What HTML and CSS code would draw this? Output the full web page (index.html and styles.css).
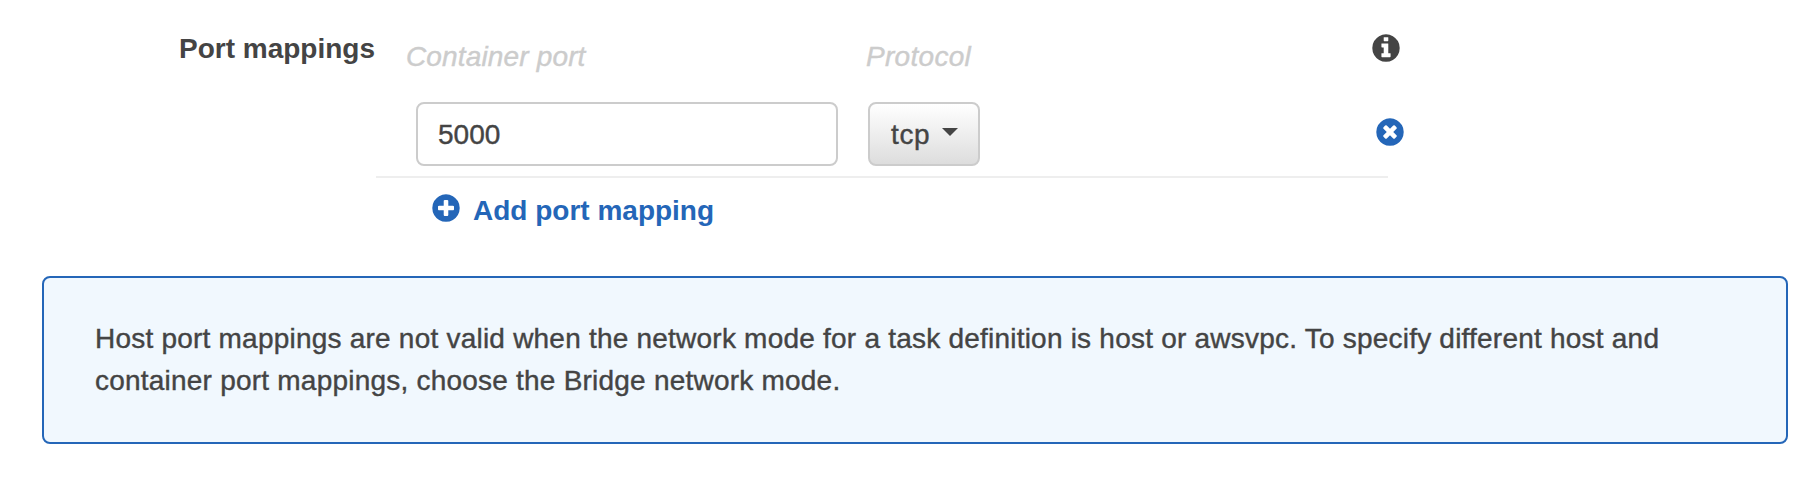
FILE: index.html
```html
<!DOCTYPE html>
<html lang="en">
<head>
<meta charset="utf-8">
<title>Port mappings</title>
<link rel="stylesheet" href="styles.css">
</head>
<body>
<main class="page">
  <section class="field">
    <label class="field-label" for="port">Port mappings</label>
    <div class="mappings">
      <div class="head">
        <span class="col-port">Container port</span>
        <span class="col-protocol">Protocol</span>
        <svg class="icon icon-info" viewBox="0 0 1792 1792"><path d="M1152 1376v-160q0-14-9-23t-23-9h-96v-512q0-14-9-23t-23-9h-320q-14 0-23 9t-9 23v160q0 14 9 23t23 9h96v320h-96q-14 0-23 9t-9 23v160q0 14 9 23t23 9h448q14 0 23-9t9-23zm-128-896v-160q0-14-9-23t-23-9h-192q-14 0-23 9t-9 23v160q0 14 9 23t23 9h192q14 0 23-9t9-23zm640 416q0 209-103 385.5t-279.5 279.5-385.5 103-385.5-103-279.5-279.5-103-385.5 103-385.5 279.5-279.5 385.5-103 385.5 103 279.5 279.5 103 385.5z"/></svg>
      </div>
      <div class="row">
        <input class="port-input" id="port" type="text" value="5000">
        <button class="protocol" type="button"><span>tcp</span><i class="caret"></i></button>
        <svg class="icon icon-remove" viewBox="0 0 1792 1792"><path d="M1277 1122q0-26-19-45l-181-181 181-181q19-19 19-45 0-27-19-46l-90-90q-19-19-46-19-26 0-45 19l-181 181-181-181q-19-19-45-19-27 0-46 19l-90 90q-19 19-19 46 0 26 19 45l181 181-181 181q-19 19-19 45 0 27 19 46l90 90q19 19 46 19 26 0 45-19l181-181 181 181q19 19 45 19 27 0 46-19l90-90q19-19 19-46zm387-226q0 209-103 385.5t-279.5 279.5-385.5 103-385.5-103-279.5-279.5-103-385.5 103-385.5 279.5-279.5 385.5-103 385.5 103 279.5 279.5 103 385.5z"/></svg>
      </div>
      <a class="add">
        <svg class="icon" viewBox="0 0 1792 1792"><path d="M1344 960v-128q0-26-19-45t-45-19h-256v-256q0-26-19-45t-45-19h-128q-26 0-45 19t-19 45v256h-256q-26 0-45 19t-19 45v128q0 26 19 45t45 19h256v256q0 26 19 45t45 19h128q26 0 45-19t19-45v-256h256q26 0 45-19t19-45zm320-64q0 209-103 385.5t-279.5 279.5-385.5 103-385.5-103-279.5-279.5-103-385.5 103-385.5 279.5-279.5 385.5-103 385.5 103 279.5 279.5 103 385.5z"/></svg>
        <span class="add-text">Add port mapping</span>
      </a>
    </div>
  </section>
  <aside class="notice">Host port mappings are not valid when the network mode for a task definition is host or awsvpc. To specify different host and<br>container port mappings, choose the Bridge network mode.</aside>
</main>
</body>
</html>
```
FILE: styles.css
```css
* { box-sizing: border-box; }
body {
  margin: 0;
  background: #fff;
  color: #444;
  font: 28px/42px "Liberation Sans", Arial, sans-serif;
}
.page { height: 482px; padding: 0 26px 0 42px; overflow: hidden; }
.field { display: grid; grid-template-columns: 334px 1fr; height: 276px; }
.field-label { padding: 28px 1px 0 0; text-align: right; font-weight: bold; white-space: nowrap; }
.head {
  display: flex;
  height: 102px;
  padding: 36px 0 0 30px;
  color: #ccc;
  font-style: italic;
  letter-spacing: .15px;
  white-space: nowrap;
}
.head, .port-input, .protocol, .notice { -webkit-text-stroke: .4px; }
.col-port { width: 460px; }
.col-protocol { width: 504px; letter-spacing: .3px; }
.icon { display: block; flex: none; width: 32px; height: 32px; fill: #2466b8; }
.icon-info { margin-top: -4px; fill: #444; }
.row {
  display: flex;
  width: 1012px;
  height: 76px;
  padding-left: 40px;
  border-bottom: 2px solid #eee;
}
.port-input {
  flex: none;
  width: 422px;
  height: 64px;
  padding: 1px 19px 0 20px;
  border: 2px solid #ccc;
  border-radius: 8px;
  background: #fff;
  color: #444;
  font: inherit;
}
.protocol {
  display: flex;
  flex: none;
  align-items: center;
  width: 112px;
  height: 64px;
  margin-left: 30px;
  padding: 1px 0 0 21px;
  border: 2px solid #ccc;
  border-radius: 8px;
  background: linear-gradient(#fff, #ddd);
  color: #444;
  font: inherit;
  letter-spacing: .6px;
}
.caret {
  margin: -5px 0 0 12px;
  border: 8px solid transparent;
  border-top-color: #444;
  border-bottom: 0;
}
.icon-remove { margin: 14px 0 0 394px; }
.add { display: flex; padding: 14px 0 0 54px; color: #2466b8; font-weight: bold; white-space: nowrap; }
.add-text { margin: -2px 0 0 11px; }
.notice {
  height: 168px;
  padding: 40px 50px 0 51px;
  border: 2px solid #2466b8;
  border-radius: 8px;
  background: #f1f8fe;
  letter-spacing: .22px;
  white-space: nowrap;
}
```
